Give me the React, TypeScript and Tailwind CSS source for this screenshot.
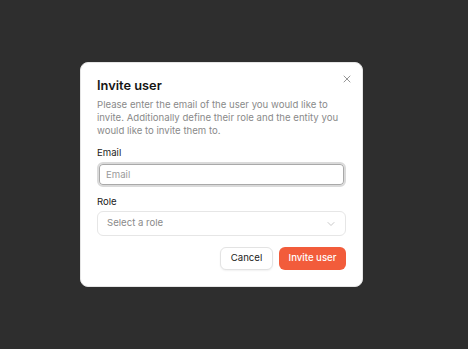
import { X, ChevronDown } from "lucide-react"

const font = { fontFamily: "Inter, 'Liberation Sans', sans-serif" }

export default function App() {
  return (
    <div className="flex h-[349px] w-full items-center bg-[#2e2e2e] pl-[80px]" style={font}>
      <div className="relative flex w-[283px] flex-col rounded-lg border border-[#e5e5e5] bg-white px-4 pb-4 pt-[15px]">
        <button className="absolute right-[9px] top-[10px] text-[#7a7a7a]">
          <X className="h-[12px] w-[12px]" strokeWidth={1.6} />
        </button>
        <h2 className="text-[12.8px] font-semibold leading-[16px] text-[#151515]">Invite user</h2>
        <p className="mt-[4px] text-[9.6px] leading-[13px] text-[#8a8a8a]">
          Please enter the email of the user you would like to invite. Additionally define their role and the entity you
          would like to invite them to.
        </p>

        <label className="mt-[9px] text-[9.6px] leading-[14px] text-[#222]">Email</label>
        <input
          autoFocus
          placeholder="Email"
          className="mt-[2px] h-[25px] w-full rounded-md border-2 border-[#dadada] bg-white px-[7px] text-[9.6px] text-[#222] shadow-[inset_0_0_0_1px_#a9a9a9] outline-none placeholder:text-[#9a9a9a]"
        />

        <label className="mt-[8px] text-[9.6px] leading-[14px] text-[#222]">Role</label>
        <div className="mt-[2px] flex h-[25px] items-center justify-between rounded-md border border-[#e6e6e6] pl-[9px] pr-[8px]">
          <span className="text-[9.6px] text-[#8a8a8a]">Select a role</span>
          <ChevronDown className="h-[12px] w-[12px] text-[#b5b5b5]" strokeWidth={1.5} />
        </div>

        <div className="mt-[11px] flex justify-end gap-[6px]">
          <button className="h-[23px] w-[53px] rounded-md border border-[#e3e3e3] bg-white text-[9.6px] text-[#222] shadow-[0_1px_2px_rgba(0,0,0,0.06)]">
            Cancel
          </button>
          <button className="h-[23px] w-[67px] rounded-md bg-[#f25c3b] text-[9.6px] font-medium text-white">
            Invite user
          </button>
        </div>
      </div>
    </div>
  )
}
